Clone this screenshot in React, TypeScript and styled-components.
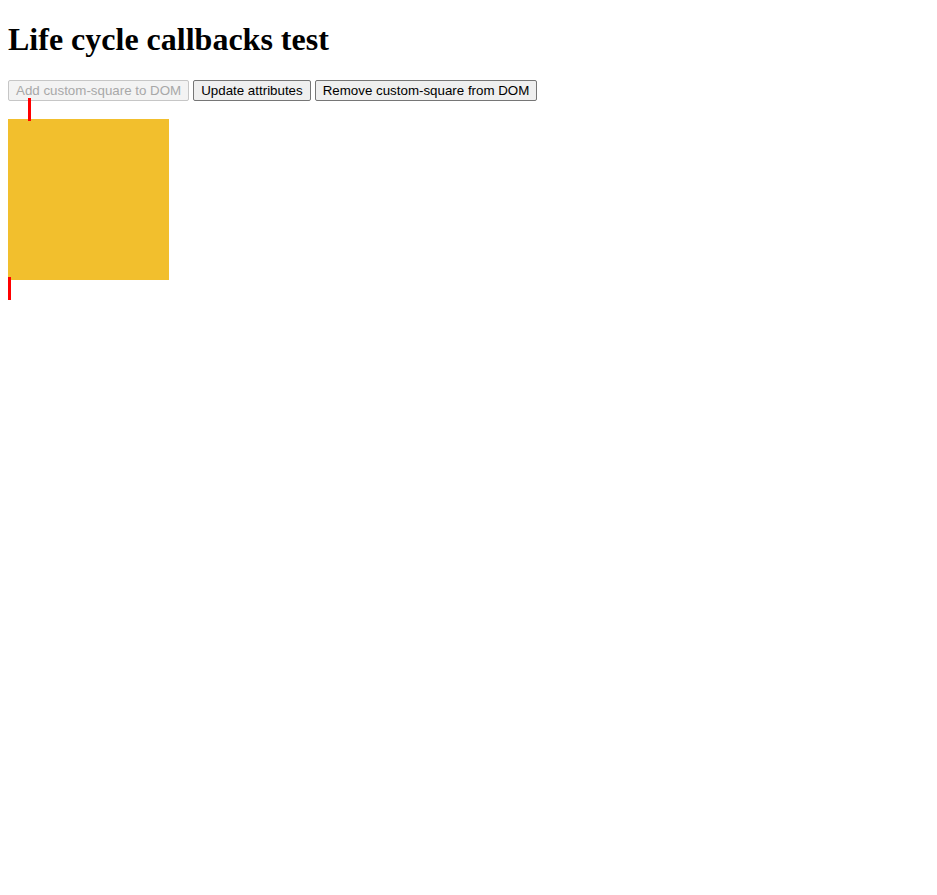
import React from "react";
import styled, { createGlobalStyle } from "styled-components";

const Global = createGlobalStyle`
  body {
    margin: 0;
    padding: 0 8px;
    font-family: "Liberation Serif", "Times New Roman", serif;
    background: #fff;
    color: #000;
  }
`;

const Title = styled.h1`
  font-family: "Liberation Serif", "Times New Roman", serif;
  font-size: 32px;
  font-weight: bold;
  margin: 21.44px 0;
`;

const Controls = styled.div`
  display: flex;
  gap: 4px;
  align-items: center;
`;

const Btn = styled.button`
  font-family: "Liberation Sans", Arial, sans-serif;
  font-size: 13.333px;
  padding: 1px 7px;
  height: 21px;
  border: 1px solid #767676;
  border-radius: 2px;
  background: #efefef;
  color: #000;
  &:disabled {
    color: #a8a8a8;
    border-color: #c6c6c6;
    background: #f3f3f3;
  }
`;

const Stage = styled.div`
  position: relative;
  margin-top: 18px;
  width: 161px;
  height: 190px;
`;

const Square = styled.div`
  width: 161px;
  height: 161px;
  background: #f2bf2d;
`;

const Tick = styled.div<{ $left: number; $top: number }>`
  position: absolute;
  left: ${(p) => p.$left}px;
  top: ${(p) => p.$top}px;
  width: 3px;
  height: 23px;
  background: #ff0000;
`;

export default function App() {
  return (
    <>
      <Global />
      <Title>Life cycle callbacks test</Title>
      <Controls>
        <Btn disabled>Add custom-square to DOM</Btn>
        <Btn>Update attributes</Btn>
        <Btn>Remove custom-square from DOM</Btn>
      </Controls>
      <Stage>
        <Square />
        <Tick $left={20} $top={-21} />
        <Tick $left={0} $top={158} />
      </Stage>
    </>
  );
}
